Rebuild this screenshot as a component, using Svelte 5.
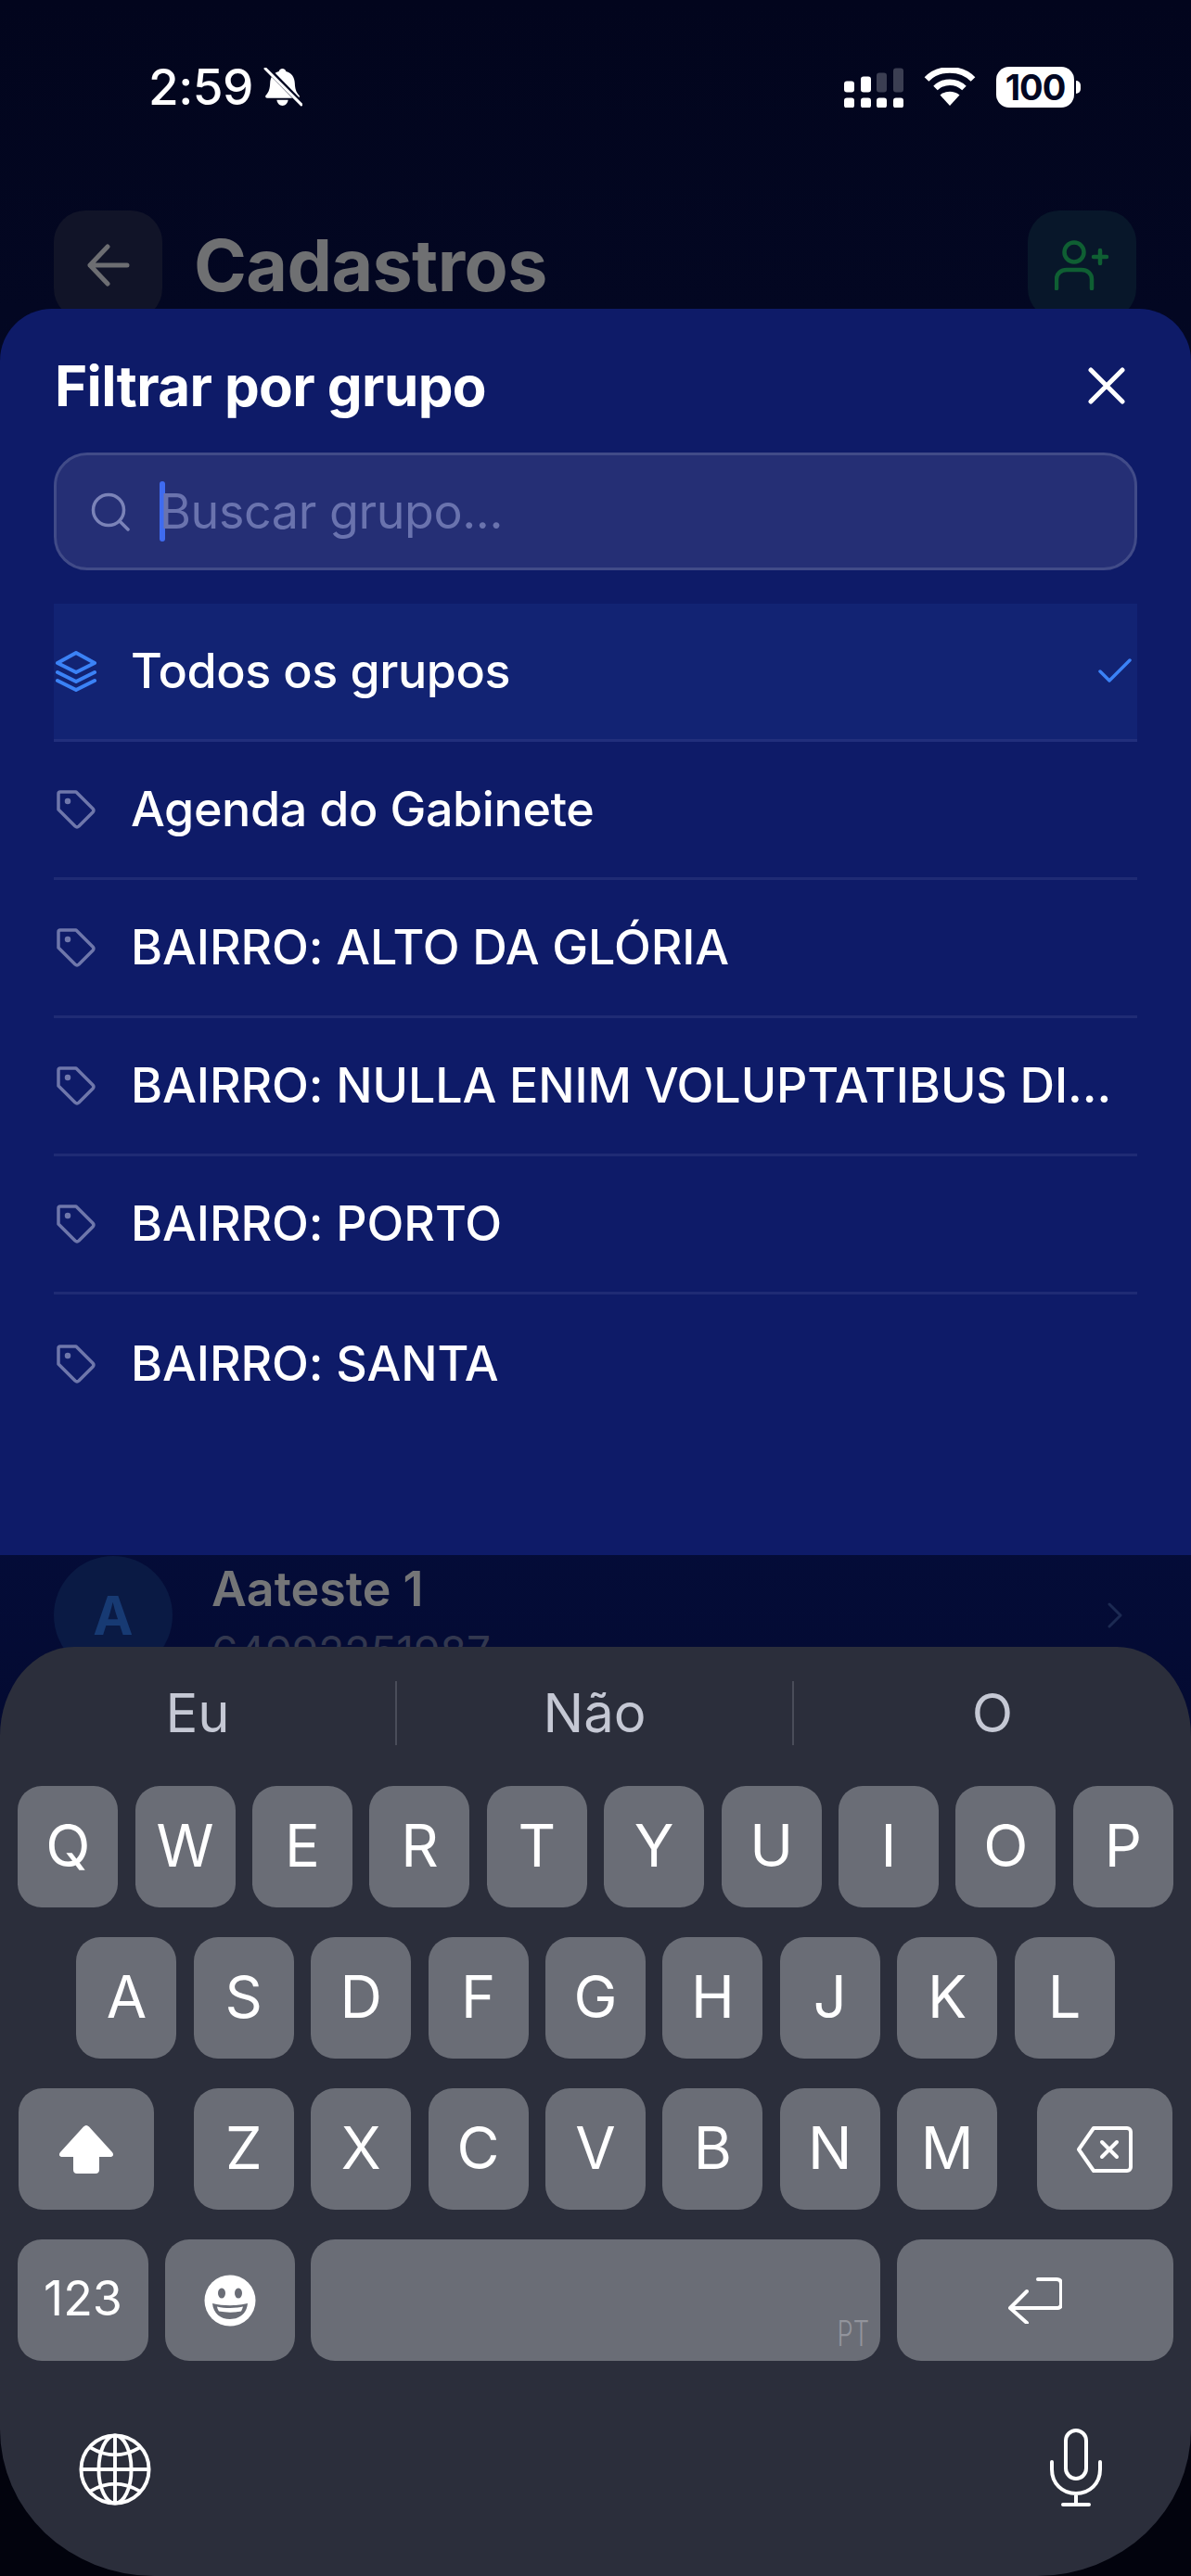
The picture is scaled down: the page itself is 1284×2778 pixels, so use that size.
<script>
  const groups = ['Agenda do Gabinete', 'BAIRRO: ALTO DA GLÓRIA', 'BAIRRO: NULLA ENIM VOLUPTATIBUS DI...', 'BAIRRO: PORTO', 'BAIRRO: SANTA'];
  const row1 = 'QWERTYUIOP'.split('');
  const row2 = 'ASDFGHJKL'.split('');
  const row3 = 'ZXCVBNM'.split('');
  const suggestions = ['Eu', 'Não', 'O'];
</script>

<div class="phone">
  <div class="status">
    <div class="status-left">
      <span class="time">2:59</span>
      <svg class="bell" viewBox="0 0 42 42"><path fill="#fff" d="M21 1c2 0 3.400 1.300 3.700 3 6 1.400 9 6.400 9.300 12 .3 6 1.200 9.500 4.500 13 1 1.200.3 3-1.500 3H5c-1.800 0-2.500-1.800-1.500-3 3.300-3.500 4.200-7 4.500-13 .3-5.600 3.300-10.600 9.300-12 .3-1.700 1.700-3 3.700-3z"/><path fill="#fff" d="M15 34h12c-.5 3.500-3 6-6 6s-5.500-2.500-6-6z"/><path stroke="#030722" stroke-width="5.500" d="M3 -1L43 40"/><path stroke="#fff" stroke-width="3" stroke-linecap="round" d="M3 1L41 39"/></svg>
    </div>
    <div class="status-right">
      <svg class="signal" viewBox="0 0 64 42"><g fill="#fff"><rect x="0" y="14" width="11" height="12" rx="3"/><rect x="18" y="9" width="11" height="17" rx="3"/><rect x="0" y="32" width="11" height="11" rx="3"/><rect x="18" y="32" width="11" height="11" rx="3"/><rect x="35" y="32" width="11" height="11" rx="3"/><rect x="53" y="32" width="11" height="11" rx="3"/></g><g fill="#3b3e52"><rect x="35" y="5" width="11" height="21" rx="3"/><rect x="53" y="0" width="11" height="26" rx="3"/></g></svg>
      <svg class="wifi" viewBox="0 0 56 42" fill="none" stroke="#fff" stroke-width="6.500"><path d="M3 12.500C16-1 40-1 53 12.500"/><path d="M12.500 22c9-8.500 22-8.500 31 0"/><path fill="#fff" stroke="none" d="M28 41L17.500 29.500c6-5 15-5 21 0z"/></svg>
      <div class="battery"><span class="bat-body">100</span><span class="bat-cap"></span></div>
    </div>
  </div>

  <header class="topbar">
    <div class="icon-btn back">
      <svg viewBox="0 0 46 46" fill="none" stroke="#6d6e72" stroke-width="5" stroke-linecap="round" stroke-linejoin="round"><path d="M43 23H3M22 3L3 23l19 20"/></svg>
    </div>
    <h1>Cadastros</h1>
    <div class="icon-btn add">
      <svg viewBox="0 0 60 54" fill="none" stroke="#0f5f33" stroke-width="4.500" stroke-linecap="round"><circle cx="21" cy="13" r="10.500"/><path d="M2 52V42c0-6 5-10 11-10h16c6 0 11 4 11 10v10M49 11v14M42 18h14"/></svg>
    </div>
  </header>

  <div class="contact-area">
    <div class="contact">
      <div class="avatar">A</div>
      <div class="contact-text">
        <div class="contact-name">Aateste 1</div>
        <div class="contact-phone">64992251987</div>
      </div>
      <svg class="chev" viewBox="0 0 16 28" fill="none" stroke="#1c2a52" stroke-width="3" stroke-linecap="round" stroke-linejoin="round"><path d="M2 2l12 12L2 26"/></svg>
    </div>
  </div>

  <section class="sheet">
    <div class="sheet-head">
      <h2>Filtrar por grupo</h2>
      <svg class="close" viewBox="0 0 40 40" stroke="#fff" stroke-width="5" stroke-linecap="round"><path d="M3 3l34 34M37 3L3 37"/></svg>
    </div>
    <div class="search">
      <svg class="search-ico" viewBox="0 0 42 42" fill="none" stroke="#7b83b8" stroke-width="3.500" stroke-linecap="round"><circle cx="19" cy="19" r="16.500"/><path d="M31 31l9 9"/></svg>
      <span class="caret"></span>
      <span class="placeholder">Buscar grupo...</span>
    </div>
    <ul class="list">
      <li class="row selected">
        <svg class="row-ico" viewBox="0 0 44 44" fill="none" stroke="#3b82f6" stroke-width="4" stroke-linecap="round" stroke-linejoin="round"><path d="M22 2L42 13 22 23 2 13z"/><path d="M2 23l20 10 20-10M2 32l20 10 20-10"/></svg>
        <span class="label">Todos os grupos</span>
        <svg class="check" viewBox="0 0 36 26" fill="none" stroke="#3b82f6" stroke-width="3.500" stroke-linecap="round" stroke-linejoin="round"><path d="M2 14l10 10L34 2"/></svg>
      </li>
      {#each groups as g}
        <li class="row">
          <svg class="row-ico tag" viewBox="0 0 42 42" fill="none" stroke="#6f77ab" stroke-width="3.500" stroke-linecap="round" stroke-linejoin="round"><path d="M2 4a2 2 0 012-2h17l18 18a3 3 0 010 4L24 39a3 3 0 01-4 0L2 21z"/><circle cx="12" cy="12" r="1.500" fill="#6f77ab"/></svg>
          <span class="label" class:caps={g.startsWith('BAIRRO')}>{g}</span>
        </li>
      {/each}
    </ul>
  </section>

  <section class="keyboard">
    <div class="suggest">
      {#each suggestions as s}
        <span class="sug">{s}</span>
      {/each}
    </div>
    <div class="keys">
      <div class="krow">
        {#each row1 as k}<div class="key">{k}</div>{/each}
      </div>
      <div class="krow">
        {#each row2 as k}<div class="key">{k}</div>{/each}
      </div>
      <div class="krow wide-gap">
        <div class="key fn">
          <svg class="shift" viewBox="0 0 60 52" fill="#fff"><path d="M30 0c1 0 2 .5 3 1.500L58 29c2 2.500 1 5-2 5H44v14c0 2.500-1.500 4-4 4H20c-2.500 0-4-1.500-4-4V34H4c-3 0-4-2.500-2-5L27 1.500C28 .5 29 0 30 0z"/></svg>
        </div>
        <div class="letters">
          {#each row3 as k}<div class="key">{k}</div>{/each}
        </div>
        <div class="key fn">
          <svg class="bksp" viewBox="0 0 60 50" fill="none" stroke="#fff" stroke-width="4" stroke-linejoin="round" stroke-linecap="round"><path d="M18 2h36a4 4 0 014 4v38a4 4 0 01-4 4H18L2 25z"/><path d="M27 17l16 16M43 17L27 33"/></svg>
        </div>
      </div>
      <div class="krow bottom">
        <div class="key k123">123</div>
        <div class="key kemoji">
          <svg class="emoji" viewBox="0 0 56 56"><circle cx="28" cy="28" r="27.500" fill="#fff"/><ellipse cx="19" cy="20" rx="4" ry="5.500" fill="#6a6d76"/><ellipse cx="37" cy="20" rx="4" ry="5.500" fill="#6a6d76"/><path d="M9 31c12 3 26 3 38 0-1 11-9 17-19 17S10 42 9 31z" fill="#6a6d76"/><path d="M14 34.500c9 2 19 2 28 0-1 3-1.500 4-2 5-8 1.500-16 1.500-24 0-.5-1-1.500-2-2-5z" fill="#fff"/></svg>
        </div>
        <div class="key kspace"><span class="pt">PT</span></div>
        <div class="key kret">
          <svg class="ret" viewBox="0 0 58 50" fill="none" stroke="#fff" stroke-width="4" stroke-linecap="round" stroke-linejoin="round"><path d="M32 2h20q5 0 5 5v22q0 4-5 4H2M20 15L2 33l18 16"/></svg>
        </div>
      </div>
    </div>
    <div class="kb-foot">
      <svg class="globe" viewBox="0 0 80 80" fill="none" stroke="#fff" stroke-width="4"><circle cx="40" cy="40" r="37.500"/><ellipse cx="40" cy="40" rx="18" ry="37.500"/><path d="M40 2.500v75M2.500 40h75M13 16Q40 32 67 16M13 64Q40 48 67 64"/></svg>
      <svg class="mic" viewBox="0 0 56 84" fill="none" stroke="#fff" stroke-width="4" stroke-linecap="round"><rect x="17" y="2" width="22" height="52" rx="11"/><path d="M2 36v8c0 15 11 26 26 26s26-11 26-26v-8M28 70v12M14 82h28"/></svg>
    </div>
  </section>
</div>

<style>
  :global(body) { margin: 0; background: #02041a; }
  .phone {
    position: relative;
    width: 1284px;
    height: 2778px;
    overflow: hidden;
    background: linear-gradient(180deg, #02051d 0%, #030722 12%, #040c38 60%, #040a30 68%, #02030d 96%);
    font-family: Inter, "Liberation Sans", sans-serif;
    color: #fff;
  }
  .status {
    height: 227px;
    box-sizing: border-box;
    padding: 68px 119px 0 160px;
    display: flex;
    justify-content: space-between;
    align-items: flex-start;
  }
  .status-left { display: flex; align-items: center; gap: 10px; height: 52px; }
  .time { font-size: 53px; font-weight: 500; line-height: 52px; letter-spacing: -0.5px; }
  .bell { width: 43px; height: 43px; }
  .status-right { display: flex; align-items: center; height: 52px; }
  .signal { width: 64px; height: 43px; margin-right: 22px; }
  .wifi { width: 56px; height: 42px; margin-right: 22px; }
  .battery { display: flex; align-items: center; gap: 2px; }
  .bat-body {
    width: 84px; height: 44px; border-radius: 14px;
    background: #fff; color: #030722;
    font-size: 38px; font-weight: 700; line-height: 44px; text-align: center;
    letter-spacing: -1px;
  }
  .bat-cap { width: 5px; height: 14px; background: #fff; border-radius: 0 5px 5px 0; }

  .topbar {
    height: 118px;
    padding: 0 59px 0 58px;
    display: flex;
    align-items: center;
  }
  .icon-btn {
    width: 117px; height: 118px; border-radius: 34px;
    display: flex; align-items: center; justify-content: center;
  }
  .back { background: #111428; }
  .back svg { width: 46px; height: 46px; }
  .add { background: #08172a; }
  .add svg { width: 60px; height: 54px; }
  h1 {
    flex: 1; margin: 0 0 0 34px;
    font-size: 77px; font-weight: 700; color: #6f7072; letter-spacing: -0.6px; line-height: 118px;
  }
  .contact-area { padding: 1333px 0 0 58px; }
  .contact { display: flex; align-items: center; height: 128px; padding-right: 74px; }
  .avatar {
    width: 128px; height: 128px; border-radius: 50%;
    background: #0a1a44; color: #173a73;
    font-size: 58px; font-weight: 700; line-height: 128px; text-align: center;
  }
  .contact-text { flex: 1; margin: 11px 0 0 42px; }
  .contact-name { font-size: 52px; font-weight: 600; color: #747577; line-height: 64px; }
  .contact-phone { font-size: 46px; color: #33384f; line-height: 64px; margin-top: 3px; }
  .chev { width: 16px; height: 28px; }

  .sheet {
    position: absolute;
    left: 0; top: 333px;
    width: 1284px; height: 1344px;
    box-sizing: border-box;
    padding: 50px 58px 0;
    background: #0e1b68;
    border-radius: 56px 56px 0 0;
  }
  .sheet-head { height: 66px; display: flex; align-items: center; justify-content: space-between; padding: 0 13px 0 1px; }
  h2 { margin: 0; font-size: 60px; font-weight: 700; letter-spacing: -0.6px; line-height: 66px; }
  .close { width: 40px; height: 40px; }
  .search {
    margin-top: 39px;
    height: 127px; box-sizing: border-box;
    border: 3px solid #414b88; border-radius: 36px;
    background: #252f75;
    display: flex; align-items: center;
    padding-left: 37px;
  }
  .search-ico { width: 42px; height: 42px; }
  .caret { width: 6px; height: 65px; background: #3f6bf0; border-radius: 3px; margin-left: 32px; }
  .placeholder { font-size: 52px; color: #6a73ae; margin-left: -6px; letter-spacing: -0.4px; }
  .list { list-style: none; margin: 36px 0 0; padding: 0; }
  .row {
    height: 149px; box-sizing: border-box;
    border-bottom: 3px solid #1f2b74;
    display: flex; align-items: center; position: relative;
  }
  .row:last-child { border-bottom: 0; }
  .selected { background: #122373; border-bottom-color: #222f7c; }
  .row-ico { width: 44px; height: 44px; margin-left: 2px; flex: none; }
  .tag { width: 42px; height: 42px; margin: 0 1px 0 3px; }
  .label { margin-left: 37px; font-size: 52px; font-weight: 450; line-height: 64px; white-space: nowrap; letter-spacing: -0.4px; }
  .caps { letter-spacing: -0.1px; }
  .check { position: absolute; right: 6px; top: 59px; width: 36px; height: 26px; }

  .keyboard {
    position: absolute;
    left: 0; top: 1776px;
    width: 1284px; height: 1002px;
    background: #2b2e3b;
    border-radius: 80px 80px 166px 166px / 96px 96px 158px 158px;
  }
  .suggest { display: flex; height: 150px; padding-top: 37px; box-sizing: border-box; align-items: flex-start; }
  .sug {
    width: 428px; height: 69px;
    display: flex; align-items: center; justify-content: center;
    font-size: 58px; color: #c5c8d4; line-height: 69px;
    border-right: 2px solid #4a4d59; box-sizing: border-box;
  }
  .sug:last-child { border-right: 0; }
  .keys { display: flex; flex-direction: column; gap: 32px; }
  .krow { display: flex; justify-content: center; gap: 18.4px; height: 131px; }
  .wide-gap { gap: 43px; }
  .bottom { justify-content: flex-start; padding-left: 19px; gap: 17.67px; }
  .letters { display: flex; gap: 18.4px; }
  .key {
    width: 108px; height: 131px; border-radius: 26px;
    background: #6a6d76;
    box-sizing: border-box; padding-bottom: 3px;
    display: flex; align-items: center; justify-content: center;
    font-size: 63px; font-weight: 400; color: #fff; line-height: 1;
  }
  .fn { width: 146px; padding-bottom: 0; }
  .shift { width: 60px; height: 52px; }
  .bksp { width: 60px; height: 50px; }
  .k123 { width: 141px; font-size: 52px; }
  .kemoji { width: 140px; padding-bottom: 0; }
  .emoji { width: 56px; height: 56px; }
  .kspace { width: 614px; position: relative; }
  .pt {
    position: absolute; right: 12px; bottom: 15px;
    font-size: 38px; font-weight: 300; color: #92949c; line-height: 30px;
    transform: scaleX(.72); transform-origin: right bottom;
  }
  .kret { width: 298px; padding-bottom: 0; }
  .ret { width: 58px; height: 50px; }
  .kb-foot { display: flex; justify-content: space-between; padding: 73px 96px 0 85px; align-items: flex-start; }
  .globe { width: 78px; height: 78px; margin-top: 5px; }
  .mic { width: 56px; height: 84px; }
</style>
